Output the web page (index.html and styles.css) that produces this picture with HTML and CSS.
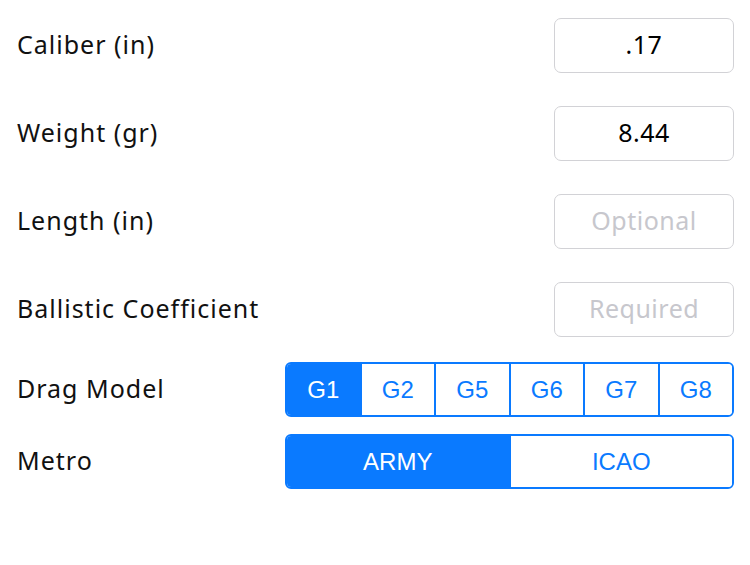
FILE: index.html
```html
<!DOCTYPE html>
<html lang="en">
<head>
    <meta charset="UTF-8">
    <meta name="viewport" content="width=device-width, initial-scale=1.0">
    <title>Bullet</title>
    <link rel="stylesheet" href="styles.css">
</head>
<body>
    <div class="form">
        <div class="row">
            <span class="label">Caliber (in)</span>
            <input type="text" class="field" value=".17">
        </div>
        <div class="row">
            <span class="label">Weight (gr)</span>
            <input type="text" class="field" value="8.44">
        </div>
        <div class="row">
            <span class="label">Length (in)</span>
            <input type="text" class="field" placeholder="Optional">
        </div>
        <div class="row">
            <span class="label">Ballistic Coefficient</span>
            <input type="text" class="field" placeholder="Required">
        </div>

        <div class="row seg-row first-seg">
            <span class="label">Drag Model</span>
            <div class="segmented">
                <button class="seg active">G1</button>
                <button class="seg">G2</button>
                <button class="seg">G5</button>
                <button class="seg">G6</button>
                <button class="seg">G7</button>
                <button class="seg">G8</button>
            </div>
        </div>
        <div class="row seg-row">
            <span class="label">Metro</span>
            <div class="segmented">
                <button class="seg active">ARMY</button>
                <button class="seg">ICAO</button>
            </div>
        </div>
    </div>
</body>
</html>
```

FILE: styles.css
```css
body {
    margin: 0;
    background: #ffffff;
    color: #000000;
    font-family: 'Noto Sans', sans-serif;
}

.form {
    display: flex;
    flex-direction: column;
    gap: 33px;
    padding: 18px 16px 0 17px;
}

.row {
    display: flex;
    align-items: center;
    justify-content: space-between;
    height: 55px;
}

.label {
    font-size: 25px;
    letter-spacing: 1px;
    color: #111;
    padding-bottom: 3px;
}

/* Text fields */
.field {
    box-sizing: border-box;
    width: 180px;
    height: 55px;
    border: 1px solid #d2d2d6;
    border-radius: 7px;
    text-align: center;
    font-family: 'Noto Sans', sans-serif;
    font-size: 25px;
    letter-spacing: 0.5px;
    color: #000;
    outline: none;
    padding: 0 8px 3px;
}

.field::placeholder {
    color: #c7c7cd;
}

/* Segmented controls */
.seg-row {
    margin-top: -8px;
}

.seg-row + .seg-row {
    margin-top: -16px;
}

.segmented {
    box-sizing: border-box;
    display: flex;
    width: 449px;
    height: 55px;
    border: 2px solid #0a7aff;
    border-radius: 6px;
    overflow: hidden;
}

.seg {
    flex: 1;
    border: none;
    border-left: 2px solid #0a7aff;
    background: #ffffff;
    color: #0a7aff;
    font-family: 'Liberation Sans', sans-serif;
    font-size: 24px;
    padding: 0;
}

.seg:first-child {
    border-left: none;
}

.seg.active {
    background: #0a7aff;
    color: #ffffff;
}
```
